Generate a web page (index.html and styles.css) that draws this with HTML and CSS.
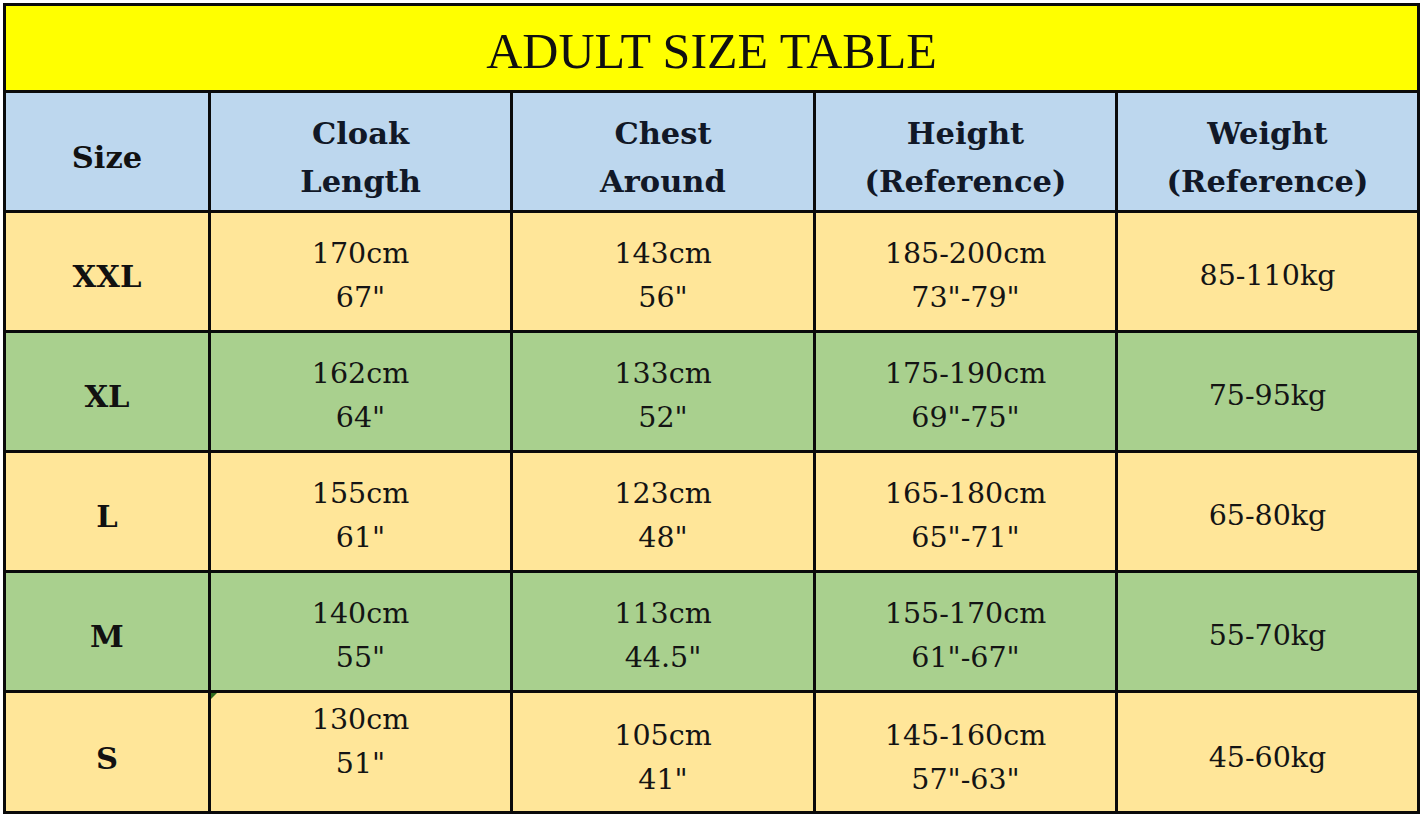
FILE: index.html
```html
<!DOCTYPE html>
<html>
<head>
<meta charset="utf-8">
<link rel="stylesheet" href="styles.css">
</head>
<body>
<div class="table">
  <div class="title">ADULT SIZE TABLE</div>

  <div class="cell head size">Size</div>
  <div class="cell head">Cloak<br>Length</div>
  <div class="cell head">Chest<br>Around</div>
  <div class="cell head">Height<br>(Reference)</div>
  <div class="cell head">Weight<br>(Reference)</div>

  <div class="cell y size">XXL</div>
  <div class="cell y">170cm<br>67"</div>
  <div class="cell y">143cm<br>56"</div>
  <div class="cell y">185-200cm<br>73"-79"</div>
  <div class="cell y">85-110kg</div>

  <div class="cell g size">XL</div>
  <div class="cell g">162cm<br>64"</div>
  <div class="cell g">133cm<br>52"</div>
  <div class="cell g">175-190cm<br>69"-75"</div>
  <div class="cell g">75-95kg</div>

  <div class="cell y size">L</div>
  <div class="cell y">155cm<br>61"</div>
  <div class="cell y">123cm<br>48"</div>
  <div class="cell y">165-180cm<br>65"-71"</div>
  <div class="cell y">65-80kg</div>

  <div class="cell g size">M</div>
  <div class="cell g">140cm<br>55"</div>
  <div class="cell g">113cm<br>44.5"</div>
  <div class="cell g">155-170cm<br>61"-67"</div>
  <div class="cell g">55-70kg</div>

  <div class="cell y size last">S</div>
  <div class="cell y last top"><span class="mark"></span>130cm<br>51"</div>
  <div class="cell y last">105cm<br>41"</div>
  <div class="cell y last">145-160cm<br>57"-63"</div>
  <div class="cell y last">45-60kg</div>
</div>
</body>
</html>
```

FILE: styles.css
```css
html, body {
  margin: 0;
  padding: 0;
  background: #ffffff;
}

body {
  width: 1425px;
  height: 819px;
  overflow: hidden;
}

.table {
  margin: 3px 0 0 3px;
  width: 1417px;
  height: 811px;
  box-sizing: border-box;
  padding: 3px;
  background: #0a0a0a;
  display: grid;
  grid-template-columns: 202px 299px 300px 299px 299px;
  grid-template-rows: 84px 117px 117px 117px 117px 117px 118px;
  gap: 3px;
  font-family: "DejaVu Serif", "Liberation Serif", serif;
  color: #141414;
}

.title {
  grid-column: 1 / -1;
  background: #ffff00;
  display: flex;
  align-items: center;
  justify-content: center;
  font-family: "Liberation Serif", serif;
  font-size: 50px;
  padding-top: 6px;
  box-sizing: border-box;
  color: #101010;
}

.cell {
  display: flex;
  align-items: center;
  justify-content: center;
  text-align: center;
  font-size: 28.5px;
  line-height: 44px;
  padding-top: 9px;
  box-sizing: border-box;
  position: relative;
}

.head {
  background: #bdd7ee;
  font-weight: bold;
  font-size: 30.5px;
  line-height: 48px;
  padding-top: 10px;
  color: #111827;
}

.size {
  font-weight: bold;
  font-size: 30.5px;
  color: #111111;
}

.y { background: #ffe699; }
.g { background: #a9d08e; }

.last { padding-top: 11px; }
.top { padding-top: 0; padding-bottom: 20px; }

.mark {
  position: absolute;
  left: 0;
  top: 0;
  width: 0;
  height: 0;
  border-top: 6px solid #2d6a1f;
  border-right: 6px solid transparent;
}
```
